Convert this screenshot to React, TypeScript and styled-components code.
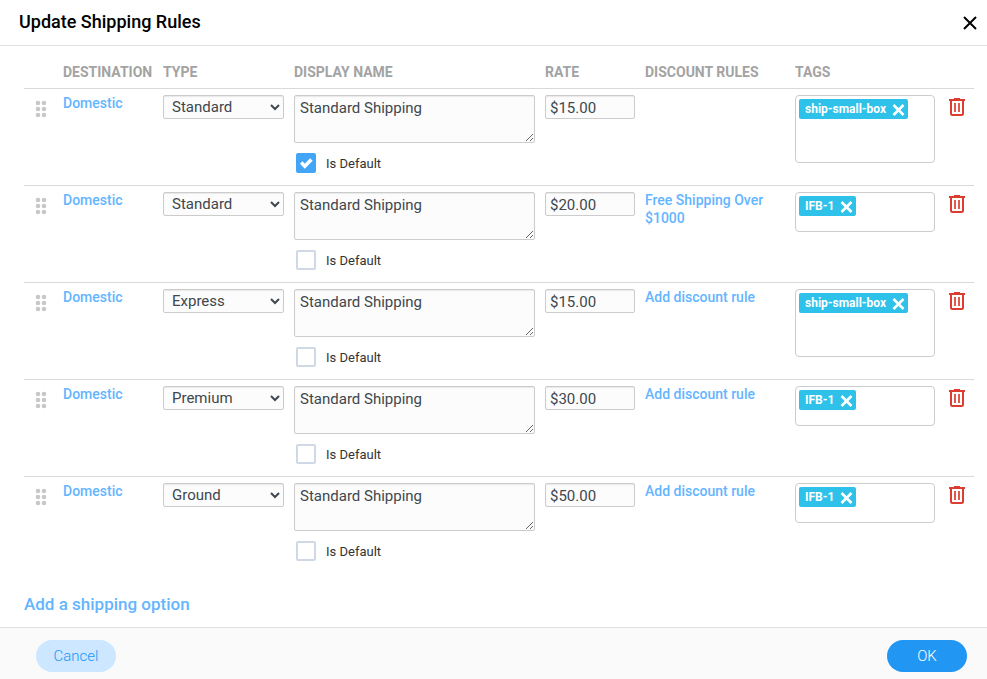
import React from "react";
import styled, { createGlobalStyle } from "styled-components";

const GlobalStyle = createGlobalStyle`
  *, *::before, *::after { box-sizing: border-box; }
  body {
    margin: 0;
    background: #fff;
    color: #222;
    font-family: Roboto, "Liberation Sans", sans-serif;
    font-size: 14px;
  }
`;

const Dialog = styled.section`
  display: flex;
  flex-direction: column;
  min-height: 100vh;
`;

const Header = styled.header`
  display: flex;
  align-items: center;
  justify-content: space-between;
  height: 46px;
  padding: 0 8px 0 19px;
  border-bottom: 1px solid #e2e2e2;
`;

const Title = styled.h1`
  margin: 0;
  color: #000;
  font-size: 18px;
  font-weight: 500;
  line-height: 24px;
  padding-bottom: 2px;
`;

const IconButton = styled.button`
  display: flex;
  align-items: center;
  justify-content: center;
  padding: 0;
  border: 0;
  background: none;
  color: inherit;
  cursor: pointer;
`;

const CloseButton = styled(IconButton)`
  width: 18px;
  height: 18px;
  color: #000;
`;

const Body = styled.main`
  flex: 1;
  padding: 10px 13px 12px 24px;
`;

const Table = styled.table`
  width: 100%;
  table-layout: fixed;
  border-collapse: separate;
  border-spacing: 0;
`;

const Col = styled.col<{ $width?: number }>`
  width: ${(p) => (p.$width ? `${p.$width}px` : "auto")};
`;

const HeadCell = styled.th`
  height: 32px;
  padding: 0 5px;
  color: #a3a3a3;
  font-size: 14px;
  font-weight: 700;
  line-height: 32px;
  text-align: left;
  text-transform: uppercase;
  white-space: nowrap;
`;

const Cell = styled.td<{ $text?: boolean }>`
  height: 97px;
  padding: ${(p) => (p.$text ? 5 : 6)}px 5px 0;
  border-top: 1px solid #d9d9d9;
  vertical-align: top;
`;

const HandleButton = styled(IconButton)`
  width: 24px;
  height: 28px;
  color: #c8c8c8;
  cursor: grab;
`;

const TextLink = styled.a<{ $large?: boolean }>`
  display: ${(p) => (p.$large ? "inline-block" : "block")};
  color: #64b5ff;
  font-size: ${(p) => (p.$large ? 17 : 14)}px;
  font-weight: 500;
  line-height: 18px;
  text-decoration: none;
`;

const field = `
  display: block;
  width: 100%;
  margin: 0;
  border: 1px solid #ccc;
  border-radius: 2px;
  background: #fcfcfc;
  box-shadow: inset 0 1px 1px rgba(0, 0, 0, 0.08);
  color: #40474d;
  font-family: inherit;
  font-size: 15px;
`;

const Select = styled.select`
  ${field}
  height: 24px;
  padding: 0 0 0 4px;
`;

const RateInput = styled.input`
  ${field}
  height: 24px;
  padding: 2px 4px 0;
`;

const NameInput = styled.textarea`
  ${field}
  height: 48px;
  padding: 2px 5px;
  line-height: 20px;
  overflow: hidden;
  resize: both;
`;

const DefaultLabel = styled.label`
  display: flex;
  align-items: flex-start;
  gap: 10px;
  margin-top: 10px;
  padding-left: 2px;
  color: #333;
  font-size: 13px;
  line-height: 22px;
`;

const CheckboxFrame = styled.span`
  display: grid;
  width: 20px;
  height: 20px;
  & > * { grid-area: 1 / 1; }
  svg { pointer-events: none; visibility: hidden; }
  input:checked + svg { visibility: visible; }
`;

const Checkbox = styled.input`
  appearance: none;
  width: 20px;
  height: 20px;
  margin: 0;
  border: 2px solid #ced9e5;
  border-radius: 2px;
  background: #fff;
  &:checked { border-color: #42a5f5; background: #42a5f5; }
`;

const TagBox = styled.div<{ $tall: boolean }>`
  display: flex;
  align-items: flex-start;
  min-height: ${(p) => (p.$tall ? 68 : 40)}px;
  padding: 3px;
  border: 1px solid #ccc;
  border-radius: 4px;
  background: #fff;
`;

const Tag = styled.span`
  display: flex;
  align-items: center;
  gap: 6px;
  height: 20px;
  padding: 0 3px 0 6px;
  border-radius: 2px;
  background: #2ec1e9;
  color: #fff;
  font-size: 12px;
  font-weight: 700;
  line-height: 20px;
  white-space: nowrap;
`;

const DeleteButton = styled(IconButton)`
  width: 24px;
  height: 24px;
  color: #dc3d31;
`;

const AddRow = styled.div`
  margin-top: 22px;
`;

const Footer = styled.footer`
  display: flex;
  align-items: center;
  justify-content: space-between;
  padding: 12px 20px 7px 36px;
  border-top: 1px solid #e0e0e0;
  background: #fafafa;
`;

const PillButton = styled.button<{ $primary?: boolean }>`
  min-width: 80px;
  height: 32px;
  padding: 0 16px;
  border: 0;
  border-radius: 16px;
  background: ${(p) => (p.$primary ? "#2196f3" : "#cce7ff")};
  color: ${(p) => (p.$primary ? "#fff" : "#2196f3")};
  font-family: inherit;
  font-size: 15px;
  font-weight: 300;
  cursor: pointer;
`;

const CloseIcon = () => (
  <svg width="14" height="14" viewBox="0 0 14 14" fill="none" stroke="currentColor" strokeWidth="2" aria-hidden="true">
    <path d="M1 1l12 12M13 1L1 13" />
  </svg>
);

const TagCloseIcon = () => (
  <svg width="13" height="13" viewBox="0 0 13 13" fill="none" stroke="currentColor" strokeWidth="2.6" aria-hidden="true">
    <path d="M1.5 2l10 10M11.5 2l-10 10" />
  </svg>
);

const GripIcon = () => (
  <svg width="12" height="18" viewBox="0 0 12 18" fill="currentColor" aria-hidden="true">
    {[3, 9, 15].map((y) => (
      <React.Fragment key={y}>
        <circle cx="3" cy={y} r="2.3" />
        <circle cx="9" cy={y} r="2.3" />
      </React.Fragment>
    ))}
  </svg>
);

const TrashIcon = () => (
  <svg width="16" height="18" viewBox="0 0 16 18" fill="none" stroke="currentColor" aria-hidden="true">
    <path d="M0 2h16" strokeWidth="2" />
    <path d="M5 .5h6" />
    <path d="M2 3v12.5Q2 17 3.5 17h9Q14 17 14 15.5V3" strokeWidth="2" />
    <path d="M6 5v9M10 5v9" strokeWidth="2" strokeOpacity="0.85" />
  </svg>
);

const CheckIcon = () => (
  <svg width="20" height="20" viewBox="0 0 20 20" fill="none" stroke="#fff" strokeWidth="3.6" aria-hidden="true">
    <path d="M5.2 9.6l3.6 3.6L15.4 6.6" />
  </svg>
);

type Rule = { type: string; rate: string; isDefault?: boolean; discount?: string; tag: string; tallTags?: boolean };

const types = ["Standard", "Express", "Premium", "Ground"];

const rules: Rule[] = [
  { type: "Standard", rate: "$15.00", isDefault: true, tag: "ship-small-box", tallTags: true },
  { type: "Standard", rate: "$20.00", discount: "Free Shipping Over $1000", tag: "IFB-1" },
  { type: "Express", rate: "$15.00", discount: "Add discount rule", tag: "ship-small-box", tallTags: true },
  { type: "Premium", rate: "$30.00", discount: "Add discount rule", tag: "IFB-1" },
  { type: "Ground", rate: "$50.00", discount: "Add discount rule", tag: "IFB-1" },
];

const RuleRow = ({ rule }: { rule: Rule }) => (
  <tr>
    <Cell>
      <HandleButton type="button" aria-label="Reorder"><GripIcon /></HandleButton>
    </Cell>
    <Cell $text><TextLink href="#">Domestic</TextLink></Cell>
    <Cell>
      <Select defaultValue={rule.type} aria-label="Type">
        {types.map((t) => <option key={t}>{t}</option>)}
      </Select>
    </Cell>
    <Cell>
      <NameInput defaultValue="Standard Shipping" aria-label="Display name" />
      <DefaultLabel>
        <CheckboxFrame>
          <Checkbox type="checkbox" defaultChecked={rule.isDefault} />
          <CheckIcon />
        </CheckboxFrame>
        Is Default
      </DefaultLabel>
    </Cell>
    <Cell><RateInput type="text" defaultValue={rule.rate} aria-label="Rate" /></Cell>
    <Cell $text>{rule.discount && <TextLink href="#">{rule.discount}</TextLink>}</Cell>
    <Cell>
      <TagBox $tall={!!rule.tallTags}>
        <Tag>
          {rule.tag}
          <IconButton type="button" aria-label={`Remove ${rule.tag}`}><TagCloseIcon /></IconButton>
        </Tag>
      </TagBox>
    </Cell>
    <Cell>
      <DeleteButton type="button" aria-label="Delete rule"><TrashIcon /></DeleteButton>
    </Cell>
  </tr>
);

export default function App() {
  return (
    <>
      <GlobalStyle />
      <Dialog role="dialog" aria-labelledby="dialog-title">
        <Header>
          <Title id="dialog-title">Update Shipping Rules</Title>
          <CloseButton type="button" aria-label="Close"><CloseIcon /></CloseButton>
        </Header>
        <Body>
          <Table>
            <colgroup>
              <Col $width={34} />
              <Col $width={100} />
              <Col $width={131} />
              <Col />
              <Col $width={100} />
              <Col $width={150} />
              <Col $width={150} />
              <Col $width={34} />
            </colgroup>
            <thead>
              <tr>
                <HeadCell />
                <HeadCell>Destination</HeadCell>
                <HeadCell>Type</HeadCell>
                <HeadCell>Display Name</HeadCell>
                <HeadCell>Rate</HeadCell>
                <HeadCell>Discount Rules</HeadCell>
                <HeadCell>Tags</HeadCell>
                <HeadCell />
              </tr>
            </thead>
            <tbody>
              {rules.map((rule, i) => <RuleRow key={i} rule={rule} />)}
            </tbody>
          </Table>
          <AddRow><TextLink href="#" $large>Add a shipping option</TextLink></AddRow>
        </Body>
        <Footer>
          <PillButton type="button">Cancel</PillButton>
          <PillButton type="button" $primary>OK</PillButton>
        </Footer>
      </Dialog>
    </>
  );
}
